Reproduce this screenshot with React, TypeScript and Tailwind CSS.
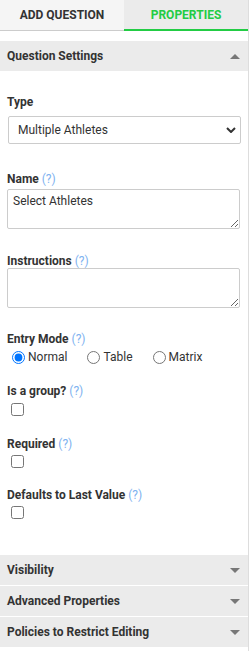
function Help() {
  return <span className="font-normal text-[#7eb2f0]"> (?)</span>;
}

function Caret({ up }: { up?: boolean }) {
  return (
    <svg width="10" height="5" viewBox="0 0 10 5" className="block text-[#777]">
      {up ? <path d="M0 5 L5 0 L10 5 Z" fill="currentColor" /> : <path d="M0 0 L10 0 L5 5 Z" fill="currentColor" />}
    </svg>
  );
}

function SectionHeader({ title, up }: { title: string; up?: boolean }) {
  return (
    <div className="flex h-[30px] shrink-0 items-center justify-between bg-[#ebebeb] pl-[7px] pr-[8px]">
      <span className="text-[12px] font-bold leading-[14px] text-[#333]">{title}</span>
      <Caret up={up} />
    </div>
  );
}

function Label({ children, className = "" }: { children: React.ReactNode; className?: string }) {
  return (
    <div className={`h-[14px] whitespace-nowrap text-[12px] font-bold leading-[14px] text-[#333] ${className}`}>
      {children}
    </div>
  );
}

function Box({ className = "" }: { className?: string }) {
  return <input type="checkbox" className={`m-0 ml-[4px] block h-[13px] w-[13px] ${className}`} />;
}

function Radio({ label, checked, className = "" }: { label: string; checked?: boolean; className?: string }) {
  return (
    <label className={`flex items-center ${className}`}>
      <input type="radio" name="mode" defaultChecked={checked} className="m-0 mr-[3px] h-[13px] w-[13px]" />
      {label}
    </label>
  );
}

export default function App() {
  return (
    <div
      className="h-[651px] w-[250px] overflow-hidden bg-white"
      style={{ fontFamily: "Roboto, 'Liberation Sans', sans-serif" }}
    >
      <div className="flex h-full w-[249px] flex-col border-r border-[#ddd]">
        <div className="flex h-[31px] shrink-0">
          <div className="flex w-1/2 items-center justify-center border-b border-[#ccc] bg-[#f5f5f5] text-[12px] font-bold text-[#333]">
            ADD QUESTION
          </div>
          <div className="flex w-1/2 items-center justify-center border-b-2 border-[#22cc44] bg-[#ebebeb] text-[12px] font-bold text-[#22cc44]">
            PROPERTIES
          </div>
        </div>

        <div className="mt-[10px]">
          <SectionHeader title="Question Settings" up />
        </div>

        <div className="flex flex-col px-[7px]">
          <Label className="mt-[24px]">Type</Label>
          <div className="relative ml-[1px] mt-[7px] h-[28px] w-[233px]">
            <select className="block h-[28px] w-full appearance-none rounded-[2px] border border-[#ccc] bg-white pl-[9px] text-[12px] text-[#333] outline-none">
              <option>Multiple Athletes</option>
            </select>
            <svg width="10" height="6" viewBox="0 0 10 6" className="pointer-events-none absolute right-[5px] top-[11px]">
              <path d="M1 1 L5 5 L9 1" stroke="#333" strokeWidth="2" fill="none" />
            </svg>
          </div>

          <Label className="mt-[28px]">
            Name
            <Help />
          </Label>
          <textarea
            defaultValue="Select Athletes"
            className="mt-[3px] block h-[40px] w-[233px] rounded-[2px] border border-[#ccc] px-[5px] py-[3px] text-[12px] leading-[16px] text-[#333] outline-none"
          />

          <Label className="mt-[25px]">
            Instructions
            <Help />
          </Label>
          <textarea className="block h-[40px] w-[233px] rounded-[2px] border border-[#ccc] px-[5px] py-[3px] text-[12px] leading-[16px] outline-none" />

          <Label className="mt-[24px]">
            Entry Mode
            <Help />
          </Label>
          <div className="mt-[2px] flex h-[18px] items-center text-[12px] text-[#333]">
            <Radio label="Normal" checked className="ml-[5px]" />
            <Radio label="Table" className="ml-[20px]" />
            <Radio label="Matrix" className="ml-[20px]" />
          </div>

          <Label className="mt-[18px]">
            Is a group?
            <Help />
          </Label>
          <Box className="mt-[5px]" />

          <Label className="mt-[21px]">
            Required
            <Help />
          </Label>
          <Box className="mt-[4px]" />

          <Label className="mt-[20px]">
            Defaults to Last Value
            <Help />
          </Label>
          <Box className="mt-[4px]" />
        </div>

        <div className="mt-[36px] flex flex-col gap-[1px]">
          <SectionHeader title="Visibility" />
          <SectionHeader title="Advanced Properties" />
          <SectionHeader title="Policies to Restrict Editing" />
        </div>
      </div>
    </div>
  );
}
